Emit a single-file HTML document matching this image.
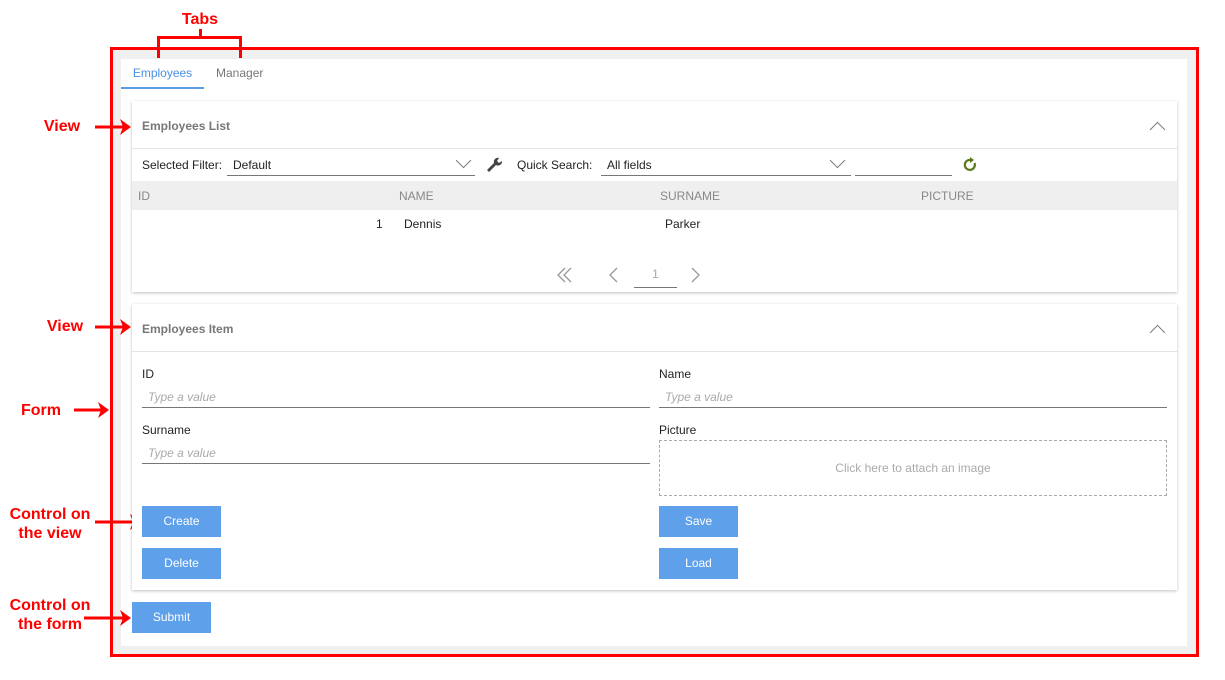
<!DOCTYPE html><html><head><style>
*{box-sizing:border-box;margin:0;padding:0}
body{width:1225px;height:680px;background:#fff;font-family:"Liberation Sans",sans-serif;position:relative;overflow:hidden;font-size:12px;color:#222}
.a{position:absolute}
.red{color:#f00;font-weight:bold;font-size:16px;text-align:center;line-height:19px}
.panel{position:absolute;left:132px;width:1045px;background:#fff;box-shadow:0 1px 3px rgba(0,0,0,.25)}
.ph{height:48px;border-bottom:1px solid #e4e4e4;font-weight:bold;color:#777;font-size:12px;padding:18px 10px;position:relative}
.btn{position:absolute;width:79px;height:31px;background:#5ea0ea;color:#fff;text-align:center;line-height:31px;font-size:12px}
.lbl{position:absolute;font-size:12px;color:#222}
.inp{position:absolute;height:22px;border-bottom:1px solid #777;color:#aaa;font-style:italic;font-size:12px;padding:4px 6px}
.chev{position:absolute;width:11px;height:11px;border-left:1.5px solid #777;border-top:1.5px solid #777;transform:rotate(45deg)}
</style></head><body>
<div class="a" style="left:110px;top:47px;width:1089px;height:610px;border:3px solid #f00;background:#f0f0f0"></div>
<div class="a" style="left:121px;top:59px;width:1066px;height:587px;background:#fff"></div>
<div class="a red" style="left:176px;top:10px;width:48px">Tabs</div>
<div class="a" style="left:199px;top:29px;width:3px;height:9px;background:#f00"></div>
<div class="a" style="left:157px;top:36px;width:85px;height:22px;border:3px solid #f00;border-bottom:none"></div>
<div class="a" style="left:121px;top:66px;width:83px;height:23px;color:#4a90e2;font-size:12px;text-align:center;border-bottom:2px solid #5a9be6">Employees</div>
<div class="a" style="left:216px;top:66px;color:#777;font-size:12px">Manager</div>
<div class="a red" style="left:29px;top:117px;width:66px">View</div>
<div class="a red" style="left:32px;top:317px;width:66px">View</div>
<div class="a red" style="left:8px;top:401px;width:66px">Form</div>
<div class="a red" style="left:0px;top:505px;width:100px">Control on<br>the view</div>
<div class="a red" style="left:0px;top:596px;width:100px">Control on<br>the form</div>
<svg class="a" style="left:0;top:0" width="135" height="680">
<g stroke="#f00" stroke-width="3" fill="none">
<path d="M95 127H124"/><path d="M95 327H124"/><path d="M74 410H102"/><path d="M95 522H134"/><path d="M84 618H124"/>
</g>
<g fill="#f00">
<path d="M120 119L131 127L120 135L123 127Z"/>
<path d="M120 319L131 327L120 335L123 327Z"/>
<path d="M98 402L109 410L98 418L101 410Z"/>
<path d="M130 514L141 522L130 530L133 522Z"/>
<path d="M120 610L131 618L120 626L123 618Z"/>
</g></svg>
<div class="panel" style="top:101px;height:191px">
<div class="ph">Employees List<div class="chev" style="right:14px;top:23px"></div></div>
<div class="lbl" style="left:10px;top:57px">Selected Filter:</div>
<div class="inp" style="left:95px;top:53px;width:248px;color:#222;font-style:normal">Default</div>
<div class="chev" style="left:326px;top:54px;transform:rotate(225deg)"></div>
<svg class="a" style="left:353px;top:55px" width="18" height="16" viewBox="0 0 18 16"><path d="M2 14L9 7A4 4 0 0 1 14 2L12 5L14 7L17 5A4 4 0 0 1 11 9L4 16Z" fill="#444"/></svg>
<div class="lbl" style="left:385px;top:57px">Quick Search:</div>
<div class="inp" style="left:469px;top:53px;width:250px;color:#222;font-style:normal">All fields</div>
<div class="chev" style="left:700px;top:54px;transform:rotate(225deg)"></div>
<div class="inp" style="left:723px;top:53px;width:97px"></div>
<svg class="a" style="left:830px;top:56px" width="16" height="16" viewBox="0 0 16 16"><path d="M12.5 6A5 5 0 1 1 9 3" stroke="#5a7a1e" stroke-width="2.2" fill="none"/><path d="M8 0L12 3L8 6Z" fill="#5a7a1e"/></svg>
<div class="a" style="left:0;top:80px;width:1045px;height:29px;background:#efefef;color:#888;font-size:12px">
<span class="a" style="left:6px;top:8px">ID</span><span class="a" style="left:267px;top:8px">NAME</span><span class="a" style="left:528px;top:8px">SURNAME</span><span class="a" style="left:789px;top:8px">PICTURE</span></div>
<span class="a" style="left:244px;top:116px">1</span><span class="a" style="left:272px;top:116px">Dennis</span><span class="a" style="left:533px;top:116px">Parker</span>
<svg class="a" style="left:420px;top:164px" width="150" height="20"><g stroke="#999" stroke-width="1.3" fill="none">
<path d="M13 3L6 10L13 17M19 3L12 10L19 17"/><path d="M65 3L58 10L65 17"/><path d="M140 3L147 10L140 17"/></g></svg>
<div class="a" style="left:502px;top:166px;width:43px;height:21px;border-bottom:1px solid #777;color:#aaa;text-align:center">1</div>
</div>
<div class="panel" style="top:304px;height:286px">
<div class="ph">Employees Item<div class="chev" style="right:14px;top:23px"></div></div>
<div class="lbl" style="left:10px;top:63px">ID</div>
<div class="inp" style="left:10px;top:82px;width:508px">Type a value</div>
<div class="lbl" style="left:527px;top:63px">Name</div>
<div class="inp" style="left:527px;top:82px;width:508px">Type a value</div>
<div class="lbl" style="left:10px;top:119px">Surname</div>
<div class="inp" style="left:10px;top:138px;width:508px">Type a value</div>
<div class="lbl" style="left:527px;top:119px">Picture</div>
<div class="a" style="left:527px;top:136px;width:508px;height:56px;border:1px dashed #aaa;color:#aaa;text-align:center;line-height:54px">Click here to attach an image</div>
<div class="btn" style="left:10px;top:202px">Create</div>
<div class="btn" style="left:10px;top:244px">Delete</div>
<div class="btn" style="left:527px;top:202px">Save</div>
<div class="btn" style="left:527px;top:244px">Load</div>
</div>
<div class="btn" style="left:132px;top:602px">Submit</div>
</body></html>
